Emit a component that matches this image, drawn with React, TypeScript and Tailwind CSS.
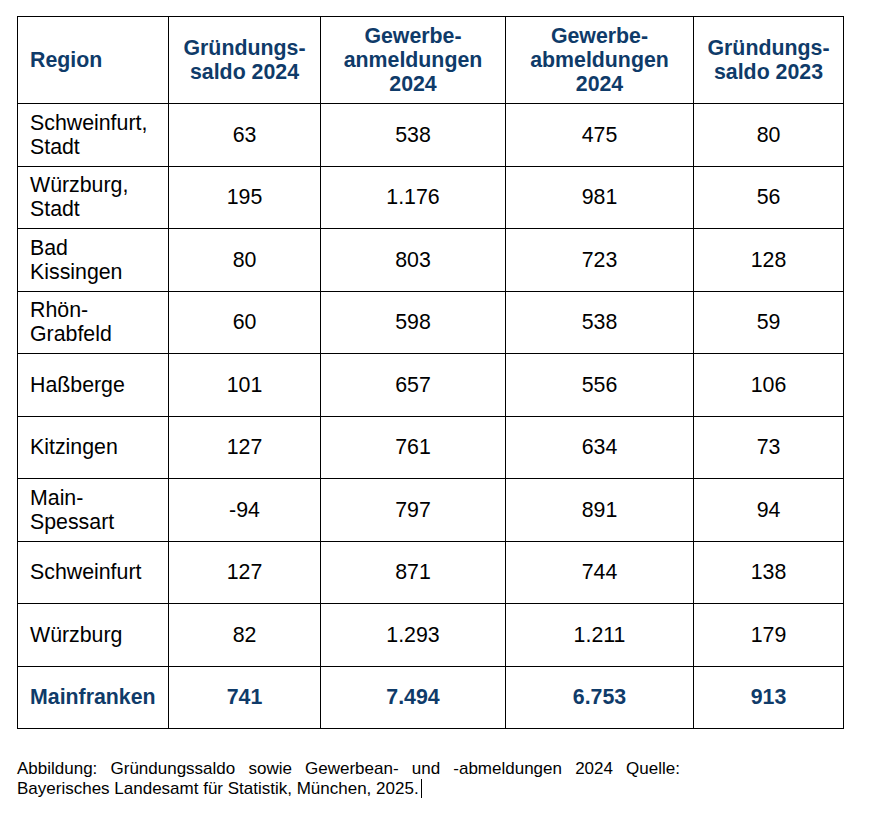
const rows: [string, string, string, string, string][] = [
  ["Schweinfurt,\nStadt", "63", "538", "475", "80"],
  ["Würzburg,\nStadt", "195", "1.176", "981", "56"],
  ["Bad\nKissingen", "80", "803", "723", "128"],
  ["Rhön-\nGrabfeld", "60", "598", "538", "59"],
  ["Haßberge", "101", "657", "556", "106"],
  ["Kitzingen", "127", "761", "634", "73"],
  ["Main-\nSpessart", "-94", "797", "891", "94"],
  ["Schweinfurt", "127", "871", "744", "138"],
  ["Würzburg", "82", "1.293", "1.211", "179"],
];

const cell = "border border-black text-center align-middle";

export default function App() {
  return (
    <div className="min-h-screen bg-white pl-[17px] pt-[16px] font-['Liberation_Sans',Arial,sans-serif] text-black">
      <table className="w-[826px] table-fixed border-collapse text-[21.33px] leading-[24px]">
        <colgroup>
          <col className="w-[151px]" />
          <col className="w-[152px]" />
          <col className="w-[185px]" />
          <col className="w-[188px]" />
          <col className="w-[150px]" />
        </colgroup>
        <thead>
          <tr className="h-[87px] font-bold text-[#0f3b69]">
            <th className="border border-black pl-3 text-left align-middle">Region</th>
            <th className={cell}>
              Gründungs-
              <br />
              saldo 2024
            </th>
            <th className={cell}>
              Gewerbe-
              <br />
              anmeldungen
              <br />
              2024
            </th>
            <th className={cell}>
              Gewerbe-
              <br />
              abmeldungen
              <br />
              2024
            </th>
            <th className={cell}>
              Gründungs-
              <br />
              saldo 2023
            </th>
          </tr>
        </thead>
        <tbody>
          {rows.map((r, i) => (
            <tr key={i} className="h-[62.5px]">
              <td className="whitespace-pre-line border border-black pl-3 align-middle">{r[0]}</td>
              <td className={cell}>{r[1]}</td>
              <td className={cell}>{r[2]}</td>
              <td className={cell}>{r[3]}</td>
              <td className={cell}>{r[4]}</td>
            </tr>
          ))}
          <tr className="h-[62.5px] font-bold text-[#0f3b69]">
            <td className="border border-black pl-3 align-middle">Mainfranken</td>
            <td className={cell}>741</td>
            <td className={cell}>7.494</td>
            <td className={cell}>6.753</td>
            <td className={cell}>913</td>
          </tr>
        </tbody>
      </table>
      <p className="mt-[30px] w-[663px] text-justify text-[17px] leading-[20px]">
        Abbildung: Gründungssaldo sowie Gewerbean- und -abmeldungen 2024 Quelle: Bayerisches Landesamt für Statistik, München, 2025.
        <span className="ml-[2px] inline-block h-[19px] w-px bg-black align-[-4px]" />
      </p>
    </div>
  );
}
